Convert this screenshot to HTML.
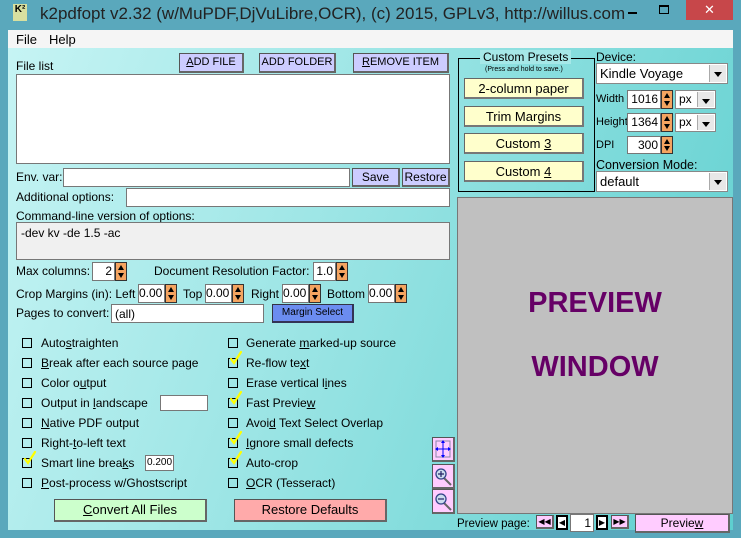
<!DOCTYPE html>
<html><head><meta charset="utf-8"><style>
*{margin:0;padding:0;box-sizing:border-box}
body{width:741px;height:538px;overflow:hidden;background:#5aa8bc;font-family:"Liberation Sans",sans-serif;font-size:12px;color:#000;position:relative}
.a{position:absolute}
.client{position:absolute;left:8px;top:48px;width:725px;height:482px;background:linear-gradient(110deg,#c6f4f4 0%,#9fe6e6 40%,#5ecfcf 100%)}
.t{position:absolute;white-space:nowrap;line-height:14px}
.btn{position:absolute;background:#ccccff;border:1px solid #555;border-right:2px solid #666;border-bottom:2px solid #666;text-align:center;font-size:11px;line-height:16px}
.in{position:absolute;background:#fff;border:1px solid #777}
.sp{position:absolute;width:12px;background:#f4a460;border:1px solid #333}
.sp:before{content:"";position:absolute;left:2px;top:2px;border-left:3px solid transparent;border-right:3px solid transparent;border-bottom:5px solid #000}
.sp:after{content:"";position:absolute;left:2px;bottom:2px;border-left:3px solid transparent;border-right:3px solid transparent;border-top:5px solid #000}
.num{text-align:right;padding-right:2px;line-height:16px}
.cb{position:absolute;width:10px;height:10px;border:1px solid #000}
.ck{position:absolute;width:14px;height:14px}
.pre{position:absolute;left:464px;width:120px;height:21px;background:#ffffcc;border:1px solid #666;border-right:2px solid #777;border-bottom:2px solid #777;text-align:center;font-size:13px;line-height:19px}
.sel{position:absolute;background:#fff;border:1px solid #888;padding-left:3px;font-size:13px}
.dd{position:absolute;right:1px;top:1px;bottom:1px;width:17px;background:#e8e8e8;border-left:1px solid #aaa}
.dd:after{content:"";position:absolute;left:4px;top:7px;border-left:4px solid transparent;border-right:4px solid transparent;border-top:5px solid #000}
.pk{position:absolute;background:#ffccff;border:1px solid #555;border-right:2px solid #666;border-bottom:2px solid #666}
u{text-decoration:underline}
</style></head><body>
<div class="a" style="left:13px;top:4px;width:14px;height:17px;background:#d8e0a0;font-size:10px;font-weight:bold;line-height:11px;text-align:center">K²</div>
<div class="t" style="left:40px;top:4px;font-size:17px;line-height:20px;color:#222">k2pdfopt v2.32 (w/MuPDF,DjVuLibre,OCR), (c) 2015, GPLv3, http://willus.com</div>
<div class="a" style="left:628px;top:12px;width:9px;height:2px;background:#000"></div>
<div class="a" style="left:659px;top:5px;width:10px;height:9px;border:1px solid #000;border-top-width:2px"></div>
<div class="a" style="left:686px;top:0;width:47px;height:20px;background:#c7474a;color:#fff;text-align:center;font-size:13px;line-height:20px">✕</div>
<div class="a" style="left:8px;top:30px;width:725px;height:18px;background:#f5f5f5"></div>
<div class="t" style="left:16px;top:33px;font-size:13px">File</div>
<div class="t" style="left:49px;top:33px;font-size:13px">Help</div>
<div class="client"></div>

<div class="btn" style="left:179px;top:53px;width:65px;height:20px"><u>A</u>DD FILE</div>
<div class="btn" style="left:259px;top:53px;width:77px;height:20px">ADD FOLDER</div>
<div class="btn" style="left:353px;top:53px;width:96px;height:20px"><u>R</u>EMOVE ITEM</div>
<div class="t" style="left:16px;top:59px">File list</div>
<div class="in" style="left:16px;top:74px;width:434px;height:90px"></div>

<div class="t" style="left:16px;top:170px">Env. var:</div>
<div class="in" style="left:63px;top:168px;width:287px;height:19px"></div>
<div class="btn" style="left:352px;top:168px;width:48px;height:19px;font-size:12px">Save</div>
<div class="btn" style="left:402px;top:168px;width:48px;height:19px;font-size:12px">Restore</div>
<div class="t" style="left:16px;top:190px">Additional options:</div>
<div class="in" style="left:126px;top:188px;width:324px;height:19px"></div>
<div class="t" style="left:16px;top:209px">Command-line version of options:</div>
<div class="in" style="left:16px;top:222px;width:434px;height:38px;background:#f0f0f0;padding:3px 0 0 4px">-dev kv -de 1.5 -ac</div>

<div class="t" style="left:16px;top:264px">Max columns:</div>
<div class="in num" style="left:92px;top:262px;width:23px;height:19px">2</div>
<div class="sp" style="left:115px;top:262px;height:19px"></div>
<div class="t" style="left:154px;top:264px">Document Resolution Factor:</div>
<div class="in num" style="left:313px;top:262px;width:23px;height:19px">1.0</div>
<div class="sp" style="left:336px;top:262px;height:19px"></div>

<div class="t" style="left:16px;top:287px">Crop Margins (in): Left</div>
<div class="in num" style="left:138px;top:284px;width:27px;height:19px">0.00</div><div class="sp" style="left:165px;top:284px;height:19px"></div>
<div class="t" style="left:183px;top:287px">Top</div>
<div class="in num" style="left:205px;top:284px;width:27px;height:19px">0.00</div><div class="sp" style="left:232px;top:284px;height:19px"></div>
<div class="t" style="left:251px;top:287px">Right</div>
<div class="in num" style="left:282px;top:284px;width:27px;height:19px">0.00</div><div class="sp" style="left:309px;top:284px;height:19px"></div>
<div class="t" style="left:327px;top:287px">Bottom</div>
<div class="in num" style="left:368px;top:284px;width:27px;height:19px">0.00</div><div class="sp" style="left:395px;top:284px;height:19px"></div>

<div class="t" style="left:16px;top:306px">Pages to convert:</div>
<div class="in" style="left:111px;top:304px;width:153px;height:19px;padding:2px 0 0 3px">(all)</div>
<div class="a" style="left:272px;top:304px;width:82px;height:19px;background:#6b8cf0;border:1px solid #334;border-right:2px solid #335;border-bottom:2px solid #335;text-align:center;font-size:10px;line-height:16px">Margin Select</div>

<svg width="0" height="0" style="position:absolute"><defs><symbol id="tk" viewBox="0 0 14 14"><path d="M2 8 L5 12 L12 1" fill="none" stroke="#ffff00" stroke-width="2.2" stroke-linecap="round"/></symbol></defs></svg>

<div class="cb" style="left:22px;top:338px"></div><div class="t" style="left:41px;top:336px">Auto<u>s</u>traighten</div>
<div class="cb" style="left:22px;top:358px"></div><div class="t" style="left:41px;top:356px"><u>B</u>reak after each source page</div>
<div class="cb" style="left:22px;top:378px"></div><div class="t" style="left:41px;top:376px">Color o<u>u</u>tput</div>
<div class="cb" style="left:22px;top:398px"></div><div class="t" style="left:41px;top:396px">Output in <u>l</u>andscape</div>
<div class="in" style="left:160px;top:395px;width:48px;height:16px"></div>
<div class="cb" style="left:22px;top:418px"></div><div class="t" style="left:41px;top:416px"><u>N</u>ative PDF output</div>
<div class="cb" style="left:22px;top:438px"></div><div class="t" style="left:41px;top:436px">Right-<u>t</u>o-left text</div>
<div class="cb" style="left:22px;top:458px"></div><svg class="ck" style="left:23px;top:451px"><use href="#tk"/></svg><div class="t" style="left:41px;top:456px">Smart line brea<u>k</u>s</div>
<div class="in" style="left:145px;top:455px;width:29px;height:16px;font-size:10px;text-align:center;line-height:14px">0.200</div>
<div class="cb" style="left:22px;top:478px"></div><div class="t" style="left:41px;top:476px"><u>P</u>ost-process w/Ghostscript</div>

<div class="cb" style="left:228px;top:338px"></div><div class="t" style="left:246px;top:336px">Generate <u>m</u>arked-up source</div>
<div class="cb" style="left:228px;top:358px"></div><svg class="ck" style="left:229px;top:351px"><use href="#tk"/></svg><div class="t" style="left:246px;top:356px">Re-flow te<u>x</u>t</div>
<div class="cb" style="left:228px;top:378px"></div><div class="t" style="left:246px;top:376px">Erase vertical l<u>i</u>nes</div>
<div class="cb" style="left:228px;top:398px"></div><svg class="ck" style="left:229px;top:391px"><use href="#tk"/></svg><div class="t" style="left:246px;top:396px">Fast Previe<u>w</u></div>
<div class="cb" style="left:228px;top:418px"></div><div class="t" style="left:246px;top:416px">Avoi<u>d</u> Text Select Overlap</div>
<div class="cb" style="left:228px;top:438px"></div><svg class="ck" style="left:229px;top:431px"><use href="#tk"/></svg><div class="t" style="left:246px;top:436px"><u>I</u>gnore small defects</div>
<div class="cb" style="left:228px;top:458px"></div><svg class="ck" style="left:229px;top:451px"><use href="#tk"/></svg><div class="t" style="left:246px;top:456px">Auto-crop</div>
<div class="cb" style="left:228px;top:478px"></div><div class="t" style="left:246px;top:476px"><u>O</u>CR (Tesseract)</div>

<div class="a" style="left:54px;top:499px;width:153px;height:23px;background:#ccffcc;border:1px solid #555;border-right:2px solid #666;border-bottom:2px solid #666;text-align:center;font-size:13px;line-height:20px"><u>C</u>onvert All Files</div>
<div class="a" style="left:234px;top:499px;width:153px;height:23px;background:#ffaaaa;border:1px solid #555;border-right:2px solid #666;border-bottom:2px solid #666;text-align:center;font-size:13px;line-height:20px">Restore Defaults</div>

<div class="a" style="left:458px;top:58px;width:137px;height:134px;border:1px solid #000"></div>
<div class="t" style="left:480px;top:50px;padding:0 3px;background:#a6e8e8;font-size:12px">Custom Presets</div>
<div class="t" style="left:485px;top:65px;font-size:7px;line-height:9px">(Press and hold to save.)</div>
<div class="pre" style="top:78px">2-column paper</div>
<div class="pre" style="top:106px">Trim Margins</div>
<div class="pre" style="top:133px">Custom <u>3</u></div>
<div class="pre" style="top:161px">Custom <u>4</u></div>

<div class="t" style="left:596px;top:50px">Device:</div>
<div class="sel" style="left:596px;top:63px;width:132px;height:21px;line-height:19px">Kindle Voyage<div class="dd"></div></div>
<div class="t" style="left:596px;top:92px;font-size:11px">Width</div>
<div class="in num" style="left:627px;top:90px;width:34px;height:19px">1016</div><div class="sp" style="left:661px;top:90px;height:19px"></div>
<div class="sel" style="left:675px;top:90px;width:41px;height:19px;line-height:17px;font-size:12px">px<div class="dd"></div></div>
<div class="t" style="left:596px;top:115px;font-size:11px">Height</div>
<div class="in num" style="left:627px;top:113px;width:34px;height:19px">1364</div><div class="sp" style="left:661px;top:113px;height:19px"></div>
<div class="sel" style="left:675px;top:113px;width:41px;height:19px;line-height:17px;font-size:12px">px<div class="dd"></div></div>
<div class="t" style="left:596px;top:138px;font-size:11px">DPI</div>
<div class="in num" style="left:627px;top:136px;width:34px;height:18px">300</div><div class="sp" style="left:661px;top:136px;height:18px"></div>
<div class="t" style="left:596px;top:158px;font-size:12.5px">Conversion Mode:</div>
<div class="sel" style="left:596px;top:171px;width:132px;height:21px;line-height:19px">default<div class="dd"></div></div>

<div class="a" style="left:457px;top:197px;width:276px;height:317px;background:#c0c0c0;border:1px solid #777"></div>
<div class="t" style="left:457px;top:287px;width:276px;text-align:center;font-size:29px;line-height:32px;font-weight:bold;color:#660066">PREVIEW</div>
<div class="t" style="left:457px;top:351px;width:276px;text-align:center;font-size:29px;line-height:32px;font-weight:bold;color:#660066">WINDOW</div>

<div class="pk" style="left:432px;top:437px;width:23px;height:25px"><svg width="20" height="22" viewBox="0 0 20 22"><rect x="3" y="3" width="14" height="16" fill="none" stroke="#88a" stroke-width="1"/><path d="M10 3V19M3 11H17" stroke="#00f" stroke-width="1"/><path d="M10 2l-2 3h4zM10 20l-2-3h4zM2 11l3-2v4zM18 11l-3-2v4z" fill="#00f"/></svg></div>
<div class="pk" style="left:432px;top:464px;width:23px;height:25px"><svg width="20" height="22" viewBox="0 0 20 22"><line x1="11" y1="13" x2="18" y2="20" stroke="#666" stroke-width="2"/><circle cx="8" cy="9" r="5" fill="#cde" stroke="#348" stroke-width="1.3"/><path d="M5 9H11M8 6V12" stroke="#226" stroke-width="1.2"/></svg></div>
<div class="pk" style="left:432px;top:489px;width:23px;height:25px"><svg width="20" height="22" viewBox="0 0 20 22"><line x1="11" y1="13" x2="18" y2="20" stroke="#666" stroke-width="2"/><circle cx="8" cy="9" r="5" fill="#cde" stroke="#348" stroke-width="1.3"/><path d="M5 9H11" stroke="#226" stroke-width="1.2"/></svg></div>

<div class="t" style="left:457px;top:517px;font-size:11.5px">Preview page:</div>
<div class="pk" style="left:536px;top:515px;width:18px;height:14px;font-size:8px;line-height:11px;text-align:center">◀◀</div>
<div class="a" style="left:556px;top:515px;width:12px;height:15px;background:#fff;border:2px solid #000;font-size:8px;line-height:11px;text-align:center">◀</div>
<div class="in num" style="left:570px;top:514px;width:24px;height:18px">1</div>
<div class="a" style="left:596px;top:515px;width:12px;height:15px;background:#fff;border:2px solid #000;font-size:8px;line-height:11px;text-align:center">▶</div>
<div class="pk" style="left:611px;top:515px;width:18px;height:14px;font-size:8px;line-height:11px;text-align:center">▶▶</div>
<div class="pk" style="left:635px;top:514px;width:95px;height:19px;text-align:center;font-size:12px;line-height:16px">Previe<u>w</u></div>
</body></html>
